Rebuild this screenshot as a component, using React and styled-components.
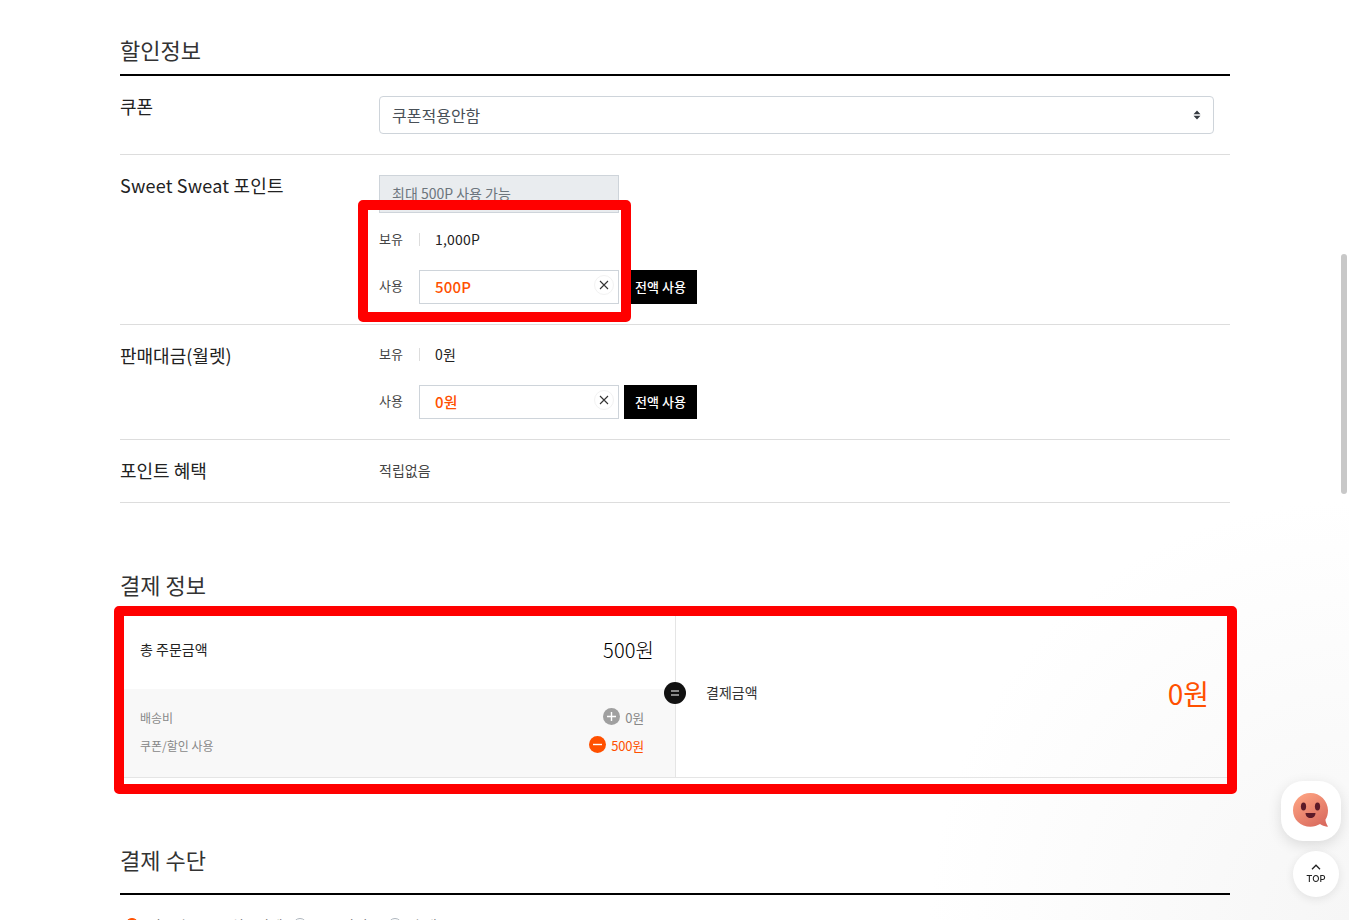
import React from 'react';
import styled, { createGlobalStyle } from 'styled-components';

const FONT = `"Noto Sans CJK KR", "Noto Sans", sans-serif`;

const Global = createGlobalStyle`
  html, body { margin: 0; height: 920px; overflow: hidden; }
  body {
    background: radial-gradient(circle 420px at 1349px 920px, #f6f6f6 0%, #fbfbfb 55%, #ffffff 100%);
    font-family: ${FONT};
    color: #222;
  }
  * { box-sizing: border-box; }
`;

const Page = styled.main`
  width: 1110px;
  margin-left: 120px;
  height: 920px;
  overflow: hidden;
`;

const SectionTitle = styled.h2`
  margin: 0;
  height: ${p => p.$height}px;
  padding-top: ${p => p.$pad}px;
  border-bottom: 2px solid #000;
  font-size: 22px;
  line-height: 30px;
  font-weight: 400;
  color: #333;
`;

const Row = styled.section`
  display: grid;
  grid-template-columns: 259px 1fr;
  padding: 20px 0;
  border-bottom: 1px solid #dddddd;
`;

const RowLabel = styled.div`
  font-size: 18px;
  line-height: 22px;
  color: #222;
  margin-top: ${p => p.$top || 0}px;
  letter-spacing: ${p => p.$track || 0}px;
`;

const SelectWrap = styled.div`
  position: relative;
  width: 835px;
`;

const Select = styled.select`
  appearance: none;
  display: block;
  width: 100%;
  height: 38px;
  padding: 0 12px;
  border: 1px solid #ced4da;
  border-radius: 4px;
  background: #fff;
  font: 400 16px ${FONT};
  color: #495057;
`;

const SelectArrows = styled.svg`
  position: absolute;
  right: 12px;
  top: 14px;
  width: 10px;
  height: 10px;
`;

const DisabledInput = styled.div`
  width: 240px;
  height: 38px;
  padding: 0 12px;
  margin-bottom: 16px;
  background: #e9ecef;
  border: 1px solid #ced4da;
  font-size: 14px;
  line-height: 34px;
  color: #6c757d;
`;

const HoldLine = styled.div`
  display: flex;
  align-items: center;
  height: 20px;
  margin: ${p => p.$first ? '-1px' : '0'} 0 21px;
`;

const SmallLabel = styled.span`
  width: 40px;
  font-size: 13px;
  line-height: 20px;
  margin-top: ${p => p.$lift ? -2 : 0}px;
  color: #444;
`;

const HoldValue = styled.span`
  padding-left: 15px;
  border-left: 1px solid #ddd;
  height: 13px;
  display: flex;
  align-items: center;
  font-size: 14px;
  letter-spacing: 0.2px;
  color: #222;
`;

const UseLine = styled.div`
  display: flex;
  align-items: center;
`;

const InputBox = styled.div`
  position: relative;
  width: 200px;
  height: 34px;
  border: 1px solid #ced4da;
  background: #fff;
  padding-left: 15px;
  font-size: 15px;
  font-weight: 500;
  line-height: 31px;
  letter-spacing: 0.2px;
  color: #ff5000;
`;

const Clear = styled.span`
  position: absolute;
  right: 4px;
  top: 4px;
  width: 20px;
  height: 20px;
  display: flex;
  align-items: center;
  justify-content: center;
  border: 1px solid #f2f2f2;
  border-radius: 50%;
  background: #fff;
`;

const AllButton = styled.button`
  width: 73px;
  height: 34px;
  margin-left: 5px;
  padding: 0 0 2px;
  border: 0;
  background: #000;
  color: #fff;
  font: 500 13px ${FONT};
`;

const PlainValue = styled.div`
  font-size: 14px;
  line-height: 22px;
  margin: -1px 0 1px;
  color: #444;
`;

const Summary = styled.section`
  display: grid;
  grid-template-columns: 556px 1fr;
  height: 167px;
  border-bottom: 1px solid #e5e5e5;
`;

const SummaryLeft = styled.div`
  display: flex;
  flex-direction: column;
  border-right: 1px solid #e5e5e5;
`;

const TotalLine = styled.div`
  height: 78px;
  padding: 0 21px 2px 20px;
  display: flex;
  align-items: center;
  justify-content: space-between;
  font-size: 14px;
  color: #222;
`;

const TotalPrice = styled.span`
  font-size: 20px;
  font-weight: 300;
  letter-spacing: 0.1px;
  color: #000;
`;

const Detail = styled.div`
  flex: 1;
  background: #f8f8f8;
  padding: 14px 31px 0 20px;
`;

const DetailLine = styled.div`
  display: flex;
  align-items: center;
  justify-content: space-between;
  height: 28px;
  font-size: 12px;
  color: #888;
`;

const DetailValue = styled.span`
  display: flex;
  align-items: center;
  gap: 5px;
  font-size: 13px;
  letter-spacing: -0.2px;
  color: ${p => p.$accent ? '#ff5000' : '#888'};
`;

const SignIcon = styled.svg`
  width: 17px;
  height: 17px;
  margin-top: -2px;
`;

const SummaryRight = styled.div`
  position: relative;
  display: flex;
  align-items: center;
  justify-content: space-between;
  padding: 0 21px 4px 30px;
`;

const EqualBadge = styled.span`
  position: absolute;
  left: -12px;
  top: 71px;
  width: 22px;
  height: 22px;
  border-radius: 50%;
  background: #111;
  display: flex;
  align-items: center;
  justify-content: center;
`;

const PayLabel = styled.span`
  font-size: 14px;
  color: #333;
`;

const PayPrice = styled.span`
  font-size: 28px;
  line-height: 34px;
  margin-top: 2px;
  color: #ff5000;
`;

const Radios = styled.div`
  display: flex;
  align-items: flex-start;
  margin-top: 22px;
  margin-left: 5px;
`;

const RadioItem = styled.label`
  display: flex;
  align-items: center;
  gap: 9px;
  width: ${p => p.$width}px;
  font-size: 14px;
  line-height: 16px;
  color: #555;
`;

const RadioDot = styled.span`
  width: 14px;
  height: 14px;
  border-radius: 50%;
  background: ${p => p.$on ? '#ff5000' : '#fff'};
  border: 1px solid ${p => p.$on ? '#ff5000' : '#adb5bd'};
  flex: none;
`;

const Annotation = styled.div`
  position: fixed;
  left: ${p => p.$x}px;
  top: ${p => p.$y}px;
  width: ${p => p.$w}px;
  height: ${p => p.$h}px;
  border: 10px solid #ff0000;
  border-radius: 5px;
  pointer-events: none;
`;

const Thumb = styled.div`
  position: fixed;
  left: 1341px;
  top: 254px;
  width: 6px;
  height: 240px;
  border-radius: 3px;
  background: #c8c8c8;
`;

const ChatButton = styled.button`
  position: fixed;
  left: 1281px;
  top: 781px;
  width: 60px;
  height: 60px;
  border: 0;
  padding: 0;
  border-radius: 22px;
  background: #fff;
  box-shadow: 0 4px 14px rgba(0,0,0,.12);
  display: flex;
  align-items: center;
  justify-content: center;
`;

const TopButton = styled.button`
  position: fixed;
  left: 1293px;
  top: 851px;
  width: 46px;
  height: 46px;
  border: 0;
  padding: 13px 0 0;
  border-radius: 50%;
  background: #fff;
  box-shadow: 0 2px 10px rgba(0,0,0,.09);
  display: flex;
  flex-direction: column;
  align-items: center;
  gap: 4px;
  font: 500 9.5px "Inter", "Liberation Sans", sans-serif;
  line-height: 10px;
  color: #222;
`;

const ClearIcon = () => (
  <svg width="10" height="10" viewBox="0 0 10 10"><path d="M1 1l8 8M9 1l-8 8" stroke="#333" strokeWidth="1.1" fill="none" /></svg>
);

const UseRow = ({ value }) => (
  <UseLine>
    <SmallLabel $lift>사용</SmallLabel>
    <InputBox>{value}<Clear><ClearIcon /></Clear></InputBox>
    <AllButton>전액 사용</AllButton>
  </UseLine>
);

const HoldRow = ({ value, first }) => (
  <HoldLine $first={first}>
    <SmallLabel>보유</SmallLabel>
    <HoldValue>{value}</HoldValue>
  </HoldLine>
);

export default function App() {
  return (
    <>
      <Global />
      <Page>
        <SectionTitle $height={76} $pad={34}>할인정보</SectionTitle>
        <Row>
          <RowLabel $top={-1}>쿠폰</RowLabel>
          <SelectWrap>
            <Select defaultValue="none"><option value="none">쿠폰적용안함</option></Select>
            <SelectArrows viewBox="0 0 10 10"><path d="M5 0.5L8.5 4.2H1.5zM5 9.5L1.5 5.8H8.5z" fill="#343a40" /></SelectArrows>
          </SelectWrap>
        </Row>
        <Row>
          <RowLabel $top={-1} $track={0.2}>Sweet Sweat 포인트</RowLabel>
          <div>
            <DisabledInput>최대 500P 사용 가능</DisabledInput>
            <HoldRow value="1,000P" />
            <UseRow value="500P" />
          </div>
        </Row>
        <Row>
          <RowLabel $top={-1}>판매대금(월렛)</RowLabel>
          <div>
            <HoldRow value="0원" first />
            <UseRow value="0원" />
          </div>
        </Row>
        <Row>
          <RowLabel $top={-1}>포인트 혜택</RowLabel>
          <PlainValue>적립없음</PlainValue>
        </Row>
        <SectionTitle $height={108} $pad={66}>결제 정보</SectionTitle>
        <Summary>
          <SummaryLeft>
            <TotalLine>총 주문금액<TotalPrice>500원</TotalPrice></TotalLine>
            <Detail>
              <DetailLine>
                배송비
                <DetailValue>
                  <SignIcon viewBox="0 0 17 17"><circle cx="8.5" cy="8.5" r="8.5" fill="#a0a0a0" /><path d="M8.5 4v9M4 8.5h9" stroke="#fff" strokeWidth="1.4" /></SignIcon>
                  <span>0원</span>
                </DetailValue>
              </DetailLine>
              <DetailLine>
                쿠폰/할인 사용
                <DetailValue $accent>
                  <SignIcon viewBox="0 0 17 17"><circle cx="8.5" cy="8.5" r="8.5" fill="#ff5000" /><path d="M4 8.5h9" stroke="#fff" strokeWidth="1.4" /></SignIcon>
                  <span>500원</span>
                </DetailValue>
              </DetailLine>
            </Detail>
          </SummaryLeft>
          <SummaryRight>
            <EqualBadge>
              <svg width="10" height="6" viewBox="0 0 10 6"><path d="M1 1h8M1 5h8" stroke="#fff" strokeWidth="1.1" /></svg>
            </EqualBadge>
            <PayLabel>결제금액</PayLabel>
            <PayPrice>0원</PayPrice>
          </SummaryRight>
        </Summary>
        <SectionTitle $height={117} $pad={66}>결제 수단</SectionTitle>
        <Radios>
          <RadioItem $width={83}><RadioDot $on />신용카드</RadioItem>
          <RadioItem $width={85}><RadioDot />실시간계좌</RadioItem>
          <RadioItem $width={95}><RadioDot />무통장입금</RadioItem>
          <RadioItem $width={80}><RadioDot />휴대폰</RadioItem>
        </Radios>
      </Page>
      <Annotation $x={358} $y={200} $w={273} $h={122} />
      <Annotation $x={114} $y={606} $w={1123} $h={188} />
      <Thumb />
      <ChatButton aria-label="chat">
        <svg width="38" height="38" viewBox="0 0 38 38">
          <defs>
            <linearGradient id="bubble" x1="0.2" y1="0.1" x2="0.8" y2="1">
              <stop offset="0" stopColor="#fb9f7f" />
              <stop offset="1" stopColor="#d96a5e" />
            </linearGradient>
          </defs>
          <path d="M18.5 1C28 1 36 8.7 36 18.5c0 3.4-.9 6.6-2.6 9.2.3 2.2 1.1 4.6 2.3 6.2.4.6 0 1-.7.8-2.6-.4-5-1.3-7-2.6-2.6 1.5-6.2 2.7-9.5 2.7C8.7 34.8 1 27.5 1 18.4 1 8.7 8.7 1 18.5 1z" fill="url(#bubble)" />
          <ellipse cx="11.5" cy="14.5" rx="2.6" ry="4" fill="#5c1a28" />
          <ellipse cx="25.5" cy="14.5" rx="2.6" ry="4" fill="#5c1a28" />
          <path d="M13.5 21h10c0 3-2.2 5-5 5s-5-2-5-5z" fill="#5c1a28" />
        </svg>
      </ChatButton>
      <TopButton aria-label="top">
        <svg width="10" height="6" viewBox="0 0 10 6"><path d="M1 5.2L5 1.2l4 4" stroke="#222" strokeWidth="1.3" fill="none" /></svg>
        TOP
      </TopButton>
    </>
  );
}
